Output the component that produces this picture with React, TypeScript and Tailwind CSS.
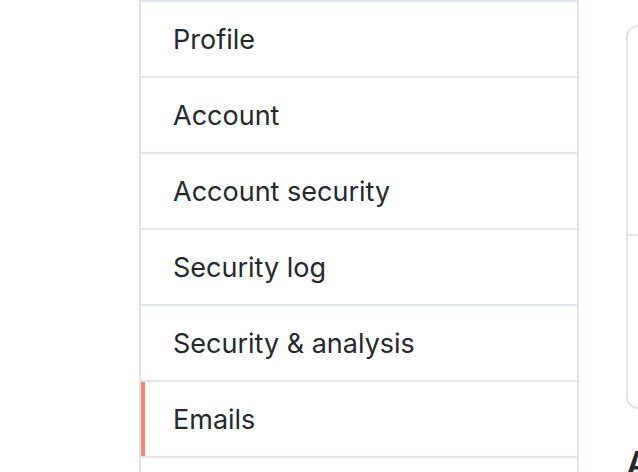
import React from "react";

const items = [
  "Profile",
  "Account",
  "Account security",
  "Security log",
  "Security & analysis",
  "Emails",
  "Notifications",
];

export default function App() {
  return (
    <div
      className="w-[638px] h-[472px] overflow-hidden bg-white flex items-start"
      style={{ fontFamily: "Inter, 'Liberation Sans', sans-serif" }}
    >
      <div className="ml-[139px] w-[440px] shrink-0 border-x-2 border-t-2 border-[#e1e4e8]">
        {items.map((it, i) => (
          <div
            key={it}
            className={
              "relative flex items-center pl-[32px] pt-[3px] text-[27px] text-[#24292e] " +
              (i === 0 ? "h-[74px]" : "h-[76px] border-t-2 border-[#e1e4e8]")
            }
          >
            {it === "Emails" && (
              <span className="absolute left-0 top-0 bottom-0 w-[4px] bg-[#f9826c]" />
            )}
            {it}
          </div>
        ))}
      </div>
      <div className="ml-[47px] shrink-0 w-[300px] flex flex-col">
        <div className="mt-[25px] border-2 border-[#e1e4e8] rounded-[12px] h-[384px] flex flex-col">
          <div className="h-[209px] border-b-2 border-[#e1e4e8]" />
        </div>
        <div className="mt-[38px] text-[34px] font-semibold text-[#24292e] leading-none">
          A
        </div>
      </div>
    </div>
  );
}
